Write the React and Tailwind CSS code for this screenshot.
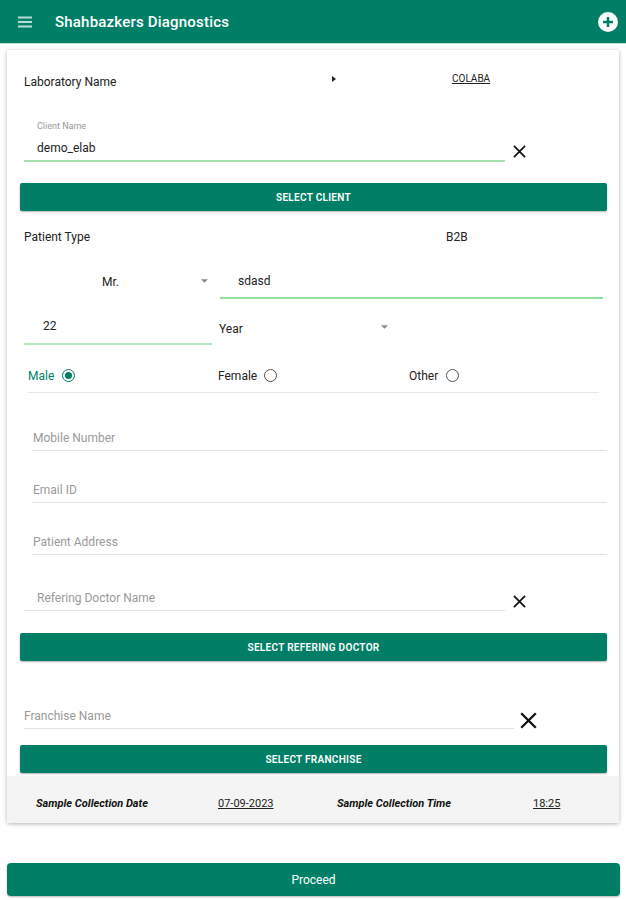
import React from "react";

const Cross = ({ size = 14, cls = "" }) => (
  <svg width={size} height={size} viewBox="0 0 14 14" className={cls} fill="none" stroke="#111" strokeWidth="1.9">
    <path d="M1 1 13 13M13 1 1 13" />
  </svg>
);

const Caret = () => (
  <svg width="7" height="4" viewBox="0 0 8 4" className="shrink-0">
    <path d="M0 0h8L4 4z" fill="#8a8a8a" />
  </svg>
);

const Btn = ({ children, cls = "" }) => (
  <div className={`h-[28px] w-[587px] rounded-[2px] bg-[#007f66] shadow-[0_1px_2px_rgba(0,0,0,0.3)] flex items-center justify-center text-white text-[10px] font-semibold tracking-[0.3px] ${cls}`}>
    {children}
  </div>
);

const Placeholder = ({ children, cls = "" }) => (
  <div className={`h-[26px] border-b border-[#e2e2e2] text-[12px] text-[#9a9a9a] flex items-center ${cls}`}>{children}</div>
);

const Radio = ({ on }) => (
  <span className={`mt-[1.5px] w-[13px] h-[13px] shrink-0 rounded-full border-[1.5px] flex items-center justify-center ${on ? "border-[#007f66]" : "border-[#555]"}`}>
    {on && <span className="w-[7px] h-[7px] rounded-full bg-[#007f66]" />}
  </span>
);

export default function App() {
  return (
    <div className="w-[626px] h-[900px] bg-white text-[12px] text-[#222] font-['Roboto',sans-serif] overflow-hidden">
      <header className="h-[44px] bg-[#007f66] border-b border-[#bfe0d8] flex items-center pl-[18px] pr-[8px] text-white">
        <svg width="14" height="12" viewBox="0 0 14 12" className="shrink-0">
          <path d="M0 1.5h14M0 6h14M0 10.500h14" stroke="#b9dcd3" strokeWidth="2" />
        </svg>
        <div className="ml-[23px] mt-[1px] text-[15px] font-medium tracking-[0.2px] flex-1">Shahbazkers Diagnostics</div>
        <span className="w-[20px] h-[20px] rounded-full bg-white flex items-center justify-center">
          <svg width="12" height="12" viewBox="0 0 12 12">
            <path d="M6 1v10M1 6h10" stroke="#007f66" strokeWidth="2.6" />
          </svg>
        </span>
      </header>

      <main className="mx-[7px] mt-[6px] w-[612px] h-[773px] bg-white rounded-[2px] shadow-[0_1px_4px_rgba(0,0,0,0.3)] flex flex-col">
        <div className="pl-[13px] pt-[13px] flex flex-col">
          <div className="h-[38px] flex items-start">
            <span className="ml-[4px] w-[308px] mt-[10px]">Laboratory Name</span>
            <svg width="4" height="6" viewBox="0 0 4 6" className="mt-[13px]"><path d="M0 0l4 3-4 3z" fill="#222" /></svg>
            <span className="ml-[116px] mt-[8px] text-[10px] underline">COLABA</span>
          </div>

          <div className="mt-[19px] h-[43px] flex items-start">
            <div className="ml-[4px] w-[481px] h-[42px] border-b-[2px] border-[#a6e3b0] pl-[13px] pt-[1px]">
              <div className="text-[9px] leading-[11px] text-[#9a9a9a]">Client Name</div>
              <div className="mt-[9px] text-[12px] leading-[14px]">demo_elab</div>
            </div>
            <Cross size={13} cls="ml-[8px] mt-[25px]" />
          </div>

          <Btn cls="mt-[20px]">SELECT CLIENT</Btn>

          <div className="mt-[17px] h-[18px] flex items-center">
            <span className="ml-[4px] w-[422px]">Patient Type</span>
            <span>B2B</span>
          </div>

          <div className="mt-[18px] h-[35px] flex items-start">
            <div className="w-[200px] h-[35px] flex items-start pt-[9px] shrink-0">
              <span className="ml-[82px] w-[99px]">Mr.</span>
              <span className="mt-[6px]"><Caret /></span>
            </div>
            <div className="w-[383px] h-[35px] border-b-[2px] border-[#8fe0a0] pl-[18px] pt-[8px]">sdasd</div>
          </div>

          <div className="mt-[10px] h-[36px] flex items-start">
            <div className="ml-[4px] w-[188px] h-[36px] border-b-[2px] border-[#b5e8bd] pl-[19px] pt-[8px] shrink-0">22</div>
            <span className="ml-[7px] mt-[11px] w-[162px]">Year</span>
            <span className="mt-[16px]"><Caret /></span>
          </div>

          <div className="mt-[10px] ml-[8px] w-[571px] h-[38px] border-b border-[#e8e8e8] flex items-start pt-[12px]">
            <span className="text-[#007f66] w-[34px]">Male</span>
            <Radio on />
            <span className="ml-[143px] w-[46px]">Female</span>
            <Radio />
            <span className="ml-[132px] w-[37px]">Other</span>
            <Radio />
          </div>

          <Placeholder cls="mt-[32px] ml-[12px] w-[575px] pl-[1px]">Mobile Number</Placeholder>
          <Placeholder cls="mt-[26px] ml-[12px] w-[575px] pl-[1px]">Email ID</Placeholder>
          <Placeholder cls="mt-[26px] ml-[12px] w-[575px] pl-[1px]">Patient Address</Placeholder>

          <div className="mt-[30px] flex items-start">
            <Placeholder cls="ml-[4px] w-[481px] pl-[13px]">Refering Doctor Name</Placeholder>
            <Cross size={13} cls="ml-[8px] mt-[10px]" />
          </div>

          <Btn cls="mt-[22px]">SELECT REFERING DOCTOR</Btn>

          <div className="mt-[42px] flex items-start">
            <Placeholder cls="ml-[4px] w-[490px]">Franchise Name</Placeholder>
            <Cross size={17} cls="ml-[6px] mt-[9px]" />
          </div>

          <Btn cls="mt-[16px]">SELECT FRANCHISE</Btn>
        </div>

        <div className="mt-[3px] h-[47px] pt-[9px] bg-[#f4f4f4] flex items-center text-[11px] shrink-0">
          <span className="ml-[29px] w-[182px] font-bold italic text-[#111]">Sample Collection Date</span>
          <span className="w-[119px] underline">07-09-2023</span>
          <span className="w-[196px] font-bold italic text-[#111]">Sample Collection Time</span>
          <span className="underline">18:25</span>
        </div>
      </main>

      <button className="mt-[40px] ml-[7px] w-[613px] h-[33px] rounded-[4px] bg-[#007f66] text-white text-[12px] flex items-center justify-center shadow-[0_1px_2px_rgba(0,0,0,0.3)]">
        Proceed
      </button>
    </div>
  );
}
